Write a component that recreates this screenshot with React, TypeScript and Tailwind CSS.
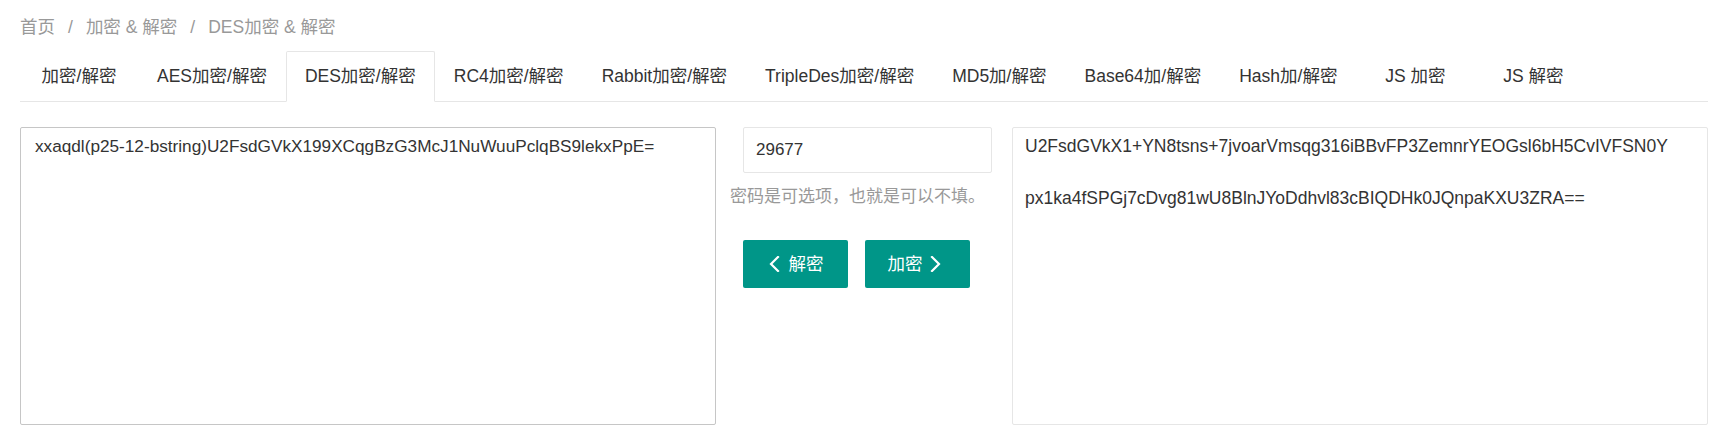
import { useState } from 'react';

const tabs = [
  '加密/解密',
  'AES加密/解密',
  'DES加密/解密',
  'RC4加密/解密',
  'Rabbit加密/解密',
  'TripleDes加密/解密',
  'MD5加/解密',
  'Base64加/解密',
  'Hash加/解密',
  'JS 加密',
  'JS 解密',
];

const cipherIn = 'xxaqdl(p25-12-bstring)U2FsdGVkX199XCqgBzG3McJ1NuWuuPclqBS9lekxPpE=';
const cipherOut =
  'U2FsdGVkX1+YN8tsns+7jvoarVmsqg316iBBvFP3ZemnrYEOGsl6bH5CvIVFSN0Y\n\npx1ka4fSPGj7cDvg81wU8BlnJYoDdhvl83cBIQDHk0JQnpaKXU3ZRA==';

function Chevron({ dir }: { dir: 'left' | 'right' }) {
  return (
    <svg width="12" height="16" viewBox="0 0 12 16" fill="none" className="shrink-0">
      <polyline
        points={dir === 'left' ? '10,1 3,8 10,15' : '2,1 9,8 2,15'}
        stroke="white"
        strokeWidth="2.2"
        strokeLinecap="square"
      />
    </svg>
  );
}

export default function App() {
  const [active, setActive] = useState(2);
  const [input, setInput] = useState(cipherIn);
  const [password, setPassword] = useState('29677');

  return (
    <div className="h-[435px] bg-white pl-[20px] pr-[14px] pt-[15px] font-['Liberation_Sans','Noto_Sans_CJK_SC',sans-serif] text-[17.5px] text-[#333]">
      {/* breadcrumb */}
      <div className="flex h-[24px] items-center leading-[24px] text-[#999]">
        <span>首页</span>
        <span className="mx-[13px]">/</span>
        <span>加密 &amp; 解密</span>
        <span className="mx-[13px]">/</span>
        <span>DES加密 &amp; 解密</span>
      </div>

      {/* tabs */}
      <ul className="mt-[12px] flex h-[51px] border-b border-[#e6e6e6]">
        {tabs.map((t, i) => (
          <li
            key={t}
            onClick={() => setActive(i)}
            className={
              i === active
                ? 'flex h-[51px] min-w-[118px] cursor-pointer items-center justify-center whitespace-nowrap rounded-t-[2px] border border-[#e6e6e6] border-b-white bg-white px-[18px]'
                : 'flex h-[51px] min-w-[118px] cursor-pointer items-center justify-center whitespace-nowrap border border-transparent px-[18px]'
            }
          >
            {t}
          </li>
        ))}
      </ul>

      {/* body */}
      <div className="mt-[25px] flex">
        <textarea
          value={input}
          onChange={(e) => setInput(e.target.value)}
          className="h-[298px] w-[696px] resize-none rounded-[2px] border border-[#c6c6c6] px-[14px] pt-[5px] text-[17.2px] leading-[26px] text-[#333] outline-none"
        />

        <div className="w-[296px] text-[17px]">
          <input
            value={password}
            onChange={(e) => setPassword(e.target.value)}
            className="ml-[27px] block h-[46px] w-[249px] rounded-[2px] border border-[#e6e6e6] px-[12px] text-[#333] outline-none"
          />
          <div className="mt-[11px] pl-[14px] leading-[25px] text-[#999]">密码是可选项，也就是可以不填。</div>
          <div className="ml-[27px] mt-[31px] flex gap-[17px] text-[17.5px]">
            <button className="flex h-[48px] w-[105px] items-center justify-center gap-[9px] rounded-[2px] bg-[#009688] text-white">
              <Chevron dir="left" />
              <span>解密</span>
            </button>
            <button className="flex h-[48px] w-[105px] items-center justify-center gap-[7px] rounded-[2px] bg-[#009688] pr-[6px] text-white">
              <span>加密</span>
              <Chevron dir="right" />
            </button>
          </div>
        </div>

        <textarea
          value={cipherOut}
          readOnly
          className="h-[298px] w-[696px] resize-none rounded-[2px] border border-[#e6e6e6] px-[12px] pt-[5px] leading-[26px] text-[#333] outline-none"
        />
      </div>
    </div>
  );
}
